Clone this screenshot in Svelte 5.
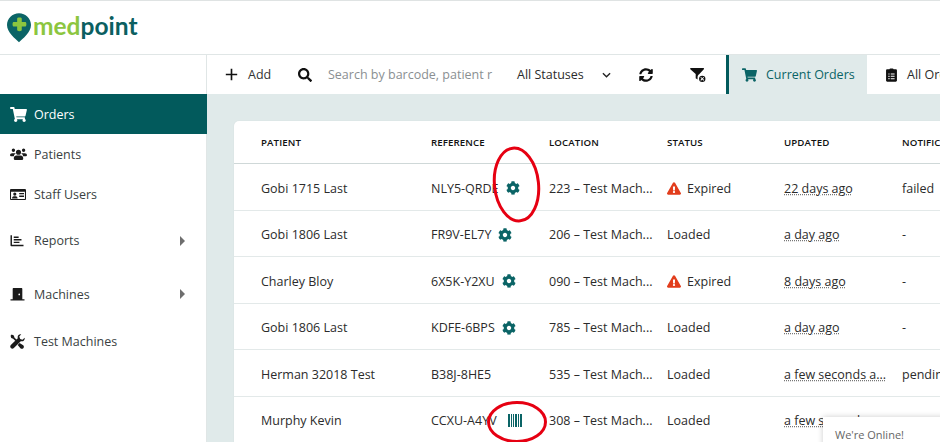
<script>
  const icons = {
    cart: { box: '0 0 576 512', d: 'M528.12 301.319l47.273-208C578.806 78.301 567.391 64 551.99 64H159.208l-9.166-44.81C147.758 8.021 137.93 0 126.529 0H24C10.745 0 0 10.745 0 24v16c0 13.255 10.745 24 24 24h69.883l70.248 343.435C147.325 417.1 136 435.222 136 456c0 30.928 25.072 56 56 56s56-25.072 56-56c0-15.674-6.447-29.835-16.824-40h209.647C430.447 426.165 424 440.326 424 456c0 30.928 25.072 56 56 56s56-25.072 56-56c0-22.172-12.888-41.332-31.579-50.405l5.517-24.276c3.413-15.018-8.002-29.319-23.403-29.319H218.117l-6.545-32h293.145c11.206 0 20.92-7.754 23.403-18.681z' },
    search: { box: '0 0 512 512', d: 'M505 442.7L405.3 343c-4.5-4.5-10.6-7-17-7H372c27.6-35.3 44-79.7 44-128C416 93.1 322.9 0 208 0S0 93.1 0 208s93.1 208 208 208c48.3 0 92.7-16.4 128-44v16.3c0 6.4 2.5 12.5 7 17l99.7 99.7c9.4 9.4 24.6 9.4 33.9 0l28.3-28.3c9.4-9.4 9.4-24.6.1-34zM208 336c-70.7 0-128-57.2-128-128 0-70.7 57.2-128 128-128 70.7 0 128 57.2 128 128 0 70.7-57.2 128-128 128z' },
    cog: { box: '0 0 512 512', d: 'M487.4 315.7l-42.6-24.6c4.3-23.2 4.3-47 0-70.2l42.6-24.6c4.9-2.8 7.1-8.6 5.5-14-11.1-35.6-30-67.8-54.7-94.6-3.8-4.1-10-5.1-14.8-2.3L380.8 110c-17.9-15.4-38.5-27.3-60.8-35.1V25.8c0-5.6-3.9-10.5-9.4-11.7-36.7-8.2-74.3-7.8-109.2 0-5.5 1.2-9.4 6.1-9.4 11.7V75c-22.2 7.9-42.8 19.8-60.8 35.1L88.7 85.5c-4.9-2.8-11-1.9-14.8 2.3-24.7 26.7-43.6 58.9-54.7 94.6-1.7 5.4.6 11.2 5.5 14L67.3 221c-4.3 23.2-4.3 47 0 70.2l-42.6 24.6c-4.9 2.8-7.1 8.6-5.5 14 11.1 35.6 30 67.8 54.7 94.6 3.8 4.1 10 5.1 14.8 2.3l42.6-24.6c17.9 15.4 38.5 27.3 60.8 35.1v49.2c0 5.6 3.9 10.5 9.4 11.7 36.7 8.2 74.3 7.8 109.2 0 5.5-1.2 9.4-6.1 9.4-11.7v-49.2c22.2-7.9 42.8-19.8 60.8-35.1l42.6 24.6c4.9 2.8 11 1.9 14.8-2.3 24.7-26.7 43.6-58.9 54.7-94.6 1.5-5.5-.7-11.3-5.6-14.1zM256 336c-44.1 0-80-35.9-80-80s35.9-80 80-80 80 35.9 80 80-35.9 80-80 80z' },
    warn: { box: '0 0 576 512', d: 'M569.517 440.013C587.975 472.007 564.806 512 527.94 512H48.054c-36.937 0-59.999-40.055-41.577-71.987L246.423 24.035c18.467-32.009 64.72-31.951 83.154 0l239.94 416.356zM288 354c-25.405 0-46 20.595-46 46s20.595 46 46 46 46-20.595 46-46-20.595-46-46-46zm-43.673-165.346l7.418 136c.347 6.364 5.609 11.346 11.982 11.346h48.546c6.373 0 11.635-4.982 11.982-11.346l7.418-136c.375-6.874-5.098-12.654-11.982-12.654h-63.383c-6.884 0-12.356 5.78-11.981 12.654z' },
    sync: { box: '0 0 512 512', d: 'M370.72 133.28C339.458 104.008 298.888 87.962 255.848 88c-77.458.068-144.328 53.178-162.791 126.85-1.344 5.363-6.122 9.15-11.651 9.15H24.103c-7.498 0-13.194-6.807-11.807-14.176C33.933 94.924 134.813 8 256 8c66.448 0 126.791 26.136 171.315 68.685L463.03 40.97C478.149 25.851 504 36.559 504 57.941V192c0 13.255-10.745 24-24 24H345.941c-21.382 0-32.09-25.851-16.971-40.971l41.75-41.749zM32 296h134.059c21.382 0 32.09 25.851 16.971 40.971l-41.75 41.75c31.262 29.273 71.835 45.319 114.876 45.28 77.418-.07 144.315-53.144 162.787-126.849 1.344-5.363 6.122-9.15 11.651-9.15h57.304c7.498 0 13.194 6.807 11.807 14.176C478.067 417.076 377.187 504 256 504c-66.448 0-126.791-26.136-171.315-68.685L48.97 471.03C33.851 486.149 8 475.441 8 454.059V320c0-13.255 10.745-24 24-24z' },
    plus: { box: '0 0 16 16', d: 'M7 1h2v6h6v2H9v6H7V9H1V7h6z' },
    users: { box: '0 0 20 16', d: 'M4 1.5a2 2 0 1 1 0 4 2 2 0 0 1 0-4zm12 0a2 2 0 1 1 0 4 2 2 0 0 1 0-4zM10 3a3 3 0 1 1 0 6 3 3 0 0 1 0-6zM0 9.5C0 7.8 1 7 2.5 7h3c.5 0 1 .2 1.3.5C5.5 8.2 4.8 9.3 4.6 10.5H1c-.6 0-1-.4-1-1zm14.5-2.5h3C19 7 20 7.8 20 9.5c0 .6-.4 1-1 1h-3.6c-.2-1.2-.9-2.3-2.2-3 .3-.3.8-.5 1.300-.5zM7.500 9.800h5c1.700 0 3 1.300 3 3v1.200c0 .6-.4 1-1 1h-9c-.6 0-1-.4-1-1v-1.200c0-1.700 1.300-3 3-3z' },
    idcard: { box: '0 0 20 16', d: 'M1.5 1h17c.8 0 1.500.7 1.500 1.500v11c0 .8-.7 1.500-1.500 1.500h-17C.7 15 0 14.300 0 13.500v-11C0 1.700.7 1 1.500 1zM1.300 4.500v8.700c0 .3.200.5.500.5h16.400c.3 0 .5-.2.500-.5V4.500zM6 5.500a2 2 0 1 1 0 4 2 2 0 0 1 0-4zM2.500 13c0-1.500.9-2.800 2.300-2.800h2.400c1.400 0 2.300 1.300 2.300 2.800zM11.500 6h6v1.800h-6zm0 3.200h6V11h-6z' },
    chart: { box: '0 0 16 16', d: 'M0 1.500h1.800v11.700H16V15H1c-.6 0-1-.4-1-1zM4 3h6v1.800H4zm0 3.200h9.500V8H4zm0 3.200h7v1.800H4z' },
    door: { box: '0 0 16 16', d: 'M3.500 1h9c.5 0 1 .5 1 1v12H16v1.500H0V14h2.500V2c0-.5.500-1 1-1zm6.500 6.500a1 1 0 1 0 0 2 1 1 0 0 0 0-2z' },
    tools: { box: '0 0 16 16', d: 'M1.800.6L.6 1.800l.7 2.400 2.100.8 3.400 3.400 1.300-1.300L4.700 3.700 4.100 1.500zM12 .3c-2.100-.5-4 1.100-3.800 3.200l.1.900L.9 11.800c-.9.900-.9 2.300 0 3.200.9.900 2.300.9 3.200 0l7.400-7.400.9.100c2.100.2 3.700-1.700 3.200-3.800L13.300 6.200 10.900 5.200 9.900 2.700zM10.200 9.600l-2 2 2.900 3.500c.8.900 2.200 1 3.100.1.900-.9.800-2.300-.1-3.100z' },
    filter: { box: '0 0 18 16', d: 'M.8 1h13.400c.7 0 1 .8.500 1.300L9.700 7.600c-1 .6-1.700 1.700-1.700 3v2.700L6 12V7.500L.3 2.300C-.2 1.800.1 1 .8 1zM13 9.200a3.400 3.400 0 1 1 0 6.800 3.400 3.400 0 0 1 0-6.800zm-1.300 1.400l-.7.700 1.300 1.300-1.300 1.300.7.700 1.300-1.300 1.300 1.300.7-.7-1.300-1.300 1.300-1.300-.7-.7-1.300 1.300z' },
    clipboard: { box: '0 0 14 18', d: 'M5.500.5h3c.6 0 1 .5 1.200 1.200H12.500c.8 0 1.500.7 1.500 1.500v13c0 .8-.7 1.500-1.500 1.500h-11C.7 17.700 0 17 0 16.200v-13c0-.8.7-1.500 1.500-1.500h2.800C4.500 1 4.900.5 5.500.5zM3 7v1.500h1.500V7zm3 .1v1.300h5V7.100zM3 10v1.500h1.500V10zm3 .1v1.300h5v-1.300zM3 13v1.500h1.500V13zm3 .1v1.300h5v-1.300z' }
  }

  const nav = [
    { label: 'Orders', icon: 'cart', w: 17, h: 15, active: true, cls: 'first' },
    { label: 'Patients', icon: 'users', w: 17, h: 14, cls: 'plain' },
    { label: 'Staff Users', icon: 'idcard', w: 16, h: 13, cls: 'plain' },
    { label: 'Reports', icon: 'chart', w: 14, h: 13, arrow: true, cls: 'wide' },
    { label: 'Machines', icon: 'door', w: 15, h: 14, arrow: true, cls: 'wide' },
    { label: 'Test Machines', icon: 'tools', w: 15, h: 15, cls: 'plain' }
  ]

  const rows = [
    { patient: 'Gobi 1715 Last', ref: 'NLY5-QRDE', mark: 'cog', loc: '223 – Test Mach...', status: 'Expired', warn: true, updated: '22 days ago', note: 'failed' },
    { patient: 'Gobi 1806 Last', ref: 'FR9V-EL7Y', mark: 'cog', loc: '206 – Test Mach...', status: 'Loaded', updated: 'a day ago', note: '-' },
    { patient: 'Charley Bloy', ref: '6X5K-Y2XU', mark: 'cog', loc: '090 – Test Mach...', status: 'Expired', warn: true, updated: '8 days ago', note: '-' },
    { patient: 'Gobi 1806 Last', ref: 'KDFE-6BPS', mark: 'cog', loc: '785 – Test Mach...', status: 'Loaded', updated: 'a day ago', note: '-' },
    { patient: 'Herman 32018 Test', ref: 'B38J-8HE5', loc: '535 – Test Mach...', status: 'Loaded', updated: 'a few seconds a...', note: 'pending' },
    { patient: 'Murphy Kevin', ref: 'CCXU-A4YV', mark: 'barcode', loc: '308 – Test Mach...', status: 'Loaded', updated: 'a few seconds a...', note: '' }
  ]
</script>

{#snippet icon(name, w, h)}
  <svg class="icon" width={w} height={h} viewBox={icons[name].box} fill="currentColor"><path d={icons[name].d} /></svg>
{/snippet}

<div class="page">
  <header class="top">
    <svg class="pin" width="24" height="30" viewBox="0 0 26 32">
      <path d="M13 0C5.800 0 0 5.700 0 12.800 0 21 9 27.500 13 31.500 17 27.500 26 21 26 12.800 26 5.700 20.200 0 13 0z" fill="#0b6466" />
      <path d="M11 6c0-1 .6-1.500 2.500-1.500S16 5 16 6v3.500h3.500c1 0 1.500.6 1.500 2.500s-.5 2.500-1.500 2.500H16V18c0 1-.6 1.500-2.500 1.500S11 19 11 18v-3.500H7.500c-1 0-1.500-.6-1.500-2.500s.5-2.500 1.500-2.500H11z" fill="#8cc63f" />
    </svg>
    <div class="word"><span class="med">med</span><span class="point">point</span></div>
  </header>

  <div class="body">
    <aside class="side">
      {#each nav as item}
        <div class="nav {item.cls}" class:active={item.active}>
          <span class="nav-icon">{@render icon(item.icon, item.w, item.h)}</span>
          <span class="nav-label">{item.label}</span>
          {#if item.arrow}<span class="arrow"></span>{/if}
        </div>
      {/each}
    </aside>

    <main class="main">
      <div class="toolbar">
        <div class="tool add">{@render icon('plus', 13, 13)}<span>Add</span></div>
        <div class="tool searchbox">
          {@render icon('search', 14, 14)}
          <span class="placeholder">Search by barcode, patient r</span>
        </div>
        <div class="tool select">
          <span>All Statuses</span>
          <svg width="9" height="6" viewBox="0 0 10 6" fill="none" stroke="#222" stroke-width="1.500"><path d="M1 1l4 4 4-4" /></svg>
        </div>
        <div class="tool sync">{@render icon('sync', 14, 14)}</div>
        <div class="tool clear">{@render icon('filter', 17, 15)}</div>
        <div class="tab current">{@render icon('cart', 15, 14)}<span>Current Orders</span></div>
        <div class="tab other">{@render icon('clipboard', 11, 14)}<span>All Orders</span></div>
      </div>

      <div class="content">
        <div class="card">
          <div class="row head">
            <div>PATIENT</div>
            <div>REFERENCE</div>
            <div>LOCATION</div>
            <div>STATUS</div>
            <div>UPDATED</div>
            <div>NOTIFICATION</div>
          </div>
          {#each rows as r}
            <div class="row">
              <div>{r.patient}</div>
              <div class="ref">
                <span>{r.ref}</span>
                {#if r.mark === 'cog'}
                  <span class="mark">{@render icon('cog', 14, 14)}</span>
                {:else if r.mark === 'barcode'}
                  <svg class="mark code" width="14" height="13" viewBox="0 0 14 13" fill="#0b6466">
                    <rect x="0" width="2" height="13" /><rect x="3" width="1" height="13" /><rect x="5" width="1" height="13" /><rect x="7" width="2" height="13" /><rect x="10" width="1" height="13" /><rect x="12" width="2" height="13" />
                  </svg>
                {/if}
              </div>
              <div>{r.loc}</div>
              <div class="status">
                {#if r.warn}<span class="warn">{@render icon('warn', 14, 13)}</span>{/if}
                <span>{r.status}</span>
              </div>
              <div><span class="time">{r.updated}</span></div>
              <div>{r.note}</div>
            </div>
          {/each}
        </div>
      </div>
    </main>
  </div>

  <svg class="marks" width="940" height="442" viewBox="0 0 940 442" fill="none" stroke="#e60012" stroke-width="3">
    <ellipse cx="516.5" cy="184.5" rx="22" ry="36.5" transform="rotate(-6 516.5 184.5)" />
    <ellipse cx="517" cy="422" rx="28.5" ry="19.5" />
  </svg>

  <div class="chat">We're Online!</div>
</div>

<style>
  :global(body) {
    margin: 0;
    background: #fff;
  }

  .page {
    position: relative;
    width: 940px;
    height: 442px;
    overflow: hidden;
    font-family: "Open Sans", "Liberation Sans", sans-serif;
    font-size: 12.5px;
    color: #2b2b2b;
    background: #fff;
    display: flex;
    flex-direction: column;
  }

  .top {
    flex: none;
    height: 55px;
    box-sizing: border-box;
    border-top: 1px solid #dfe3e3;
    border-bottom: 1px solid #e0e6e6;
    display: flex;
    align-items: flex-start;
    padding: 12px 0 0 7px;
    gap: 2px;
  }

  .word {
    font-family: Lato, "Open Sans", sans-serif;
    font-weight: 700;
    font-size: 24.5px;
    line-height: 26px;
  }

  .med {
    color: #8cc63f;
  }

  .point {
    color: #0b5f61;
  }

  .body {
    flex: 1;
    display: flex;
    min-height: 0;
  }

  .side {
    flex: none;
    width: 207px;
    padding-top: 39px;
    box-sizing: border-box;
    border-right: 1px solid #e0e6e6;
  }

  .nav {
    display: flex;
    align-items: center;
    padding: 0 21px 0 10px;
    height: 40px;
    color: #3a3f42;
  }

  .nav.active {
    background: #025a5c;
    color: #fff;
    margin-right: -1px;
  }

  .nav.wide {
    height: 53.5px;
  }

  .nav-icon {
    width: 24px;
    display: flex;
    color: #1b1b1b;
  }

  .active .nav-icon {
    color: #fff;
  }

  .nav-label {
    flex: 1;
  }

  .arrow {
    width: 0;
    height: 0;
    border-left: 5px solid #6e6e6e;
    border-top: 5px solid transparent;
    border-bottom: 5px solid transparent;
  }

  .main {
    flex: 1;
    min-width: 0;
    display: flex;
    flex-direction: column;
    background: #e0eaea;
  }

  .toolbar {
    flex: none;
    height: 39px;
    background: #fff;
    display: flex;
    align-items: stretch;
    white-space: nowrap;
  }

  .tool {
    display: flex;
    align-items: center;
    color: #111;
    flex: none;
  }

  .add {
    width: 74px;
    padding-left: 18px;
    box-sizing: border-box;
    gap: 10px;
  }

  .add span {
    color: #333;
  }

  .searchbox {
    width: 236px;
    padding-left: 17px;
    box-sizing: border-box;
    gap: 16px;
  }

  .placeholder {
    color: #8a8f92;
  }

  .select {
    width: 122px;
    gap: 18px;
  }

  .select span {
    color: #2b2b2b;
  }

  .sync {
    width: 51px;
  }

  .clear {
    width: 36px;
  }

  .tab {
    display: flex;
    align-items: center;
    flex: none;
  }

  .current {
    width: 141px;
    box-sizing: border-box;
    border-left: 3px solid #025a5c;
    background: #e0eaea;
    color: #0b6466;
    padding-left: 13px;
    gap: 9px;
  }

  .other {
    padding-left: 19px;
    gap: 10px;
    color: #111;
  }

  .other span {
    color: #2b2b2b;
  }

  .content {
    flex: 1;
    padding: 27px 0 0 27px;
    overflow: hidden;
  }

  .card {
    background: #fff;
    border-radius: 5px 0 0 0;
    width: 720px;
    box-shadow: 0 0 2px rgba(0, 0, 0, 0.06);
  }

  .row {
    display: grid;
    grid-template-columns: 170px 118px 118px 117px 118px 1fr;
    align-items: center;
    height: 46.5px;
    padding: 3px 0 0 27px;
    box-sizing: border-box;
    border-bottom: 1px solid #e3e9e9;
    white-space: nowrap;
    overflow: hidden;
  }

  .row.head {
    height: 43px;
    padding: 0 0 0 27px;
    font-size: 9.7px;
    font-weight: 600;
    color: #111;
    letter-spacing: 0.1px;
    border-bottom: 1px solid #cfd8d8;
  }

  .ref {
    display: flex;
    align-items: center;
    gap: 7px;
  }

  .mark {
    display: flex;
    color: #0b6466;
  }

  .code {
    margin-left: 4px;
  }

  .status {
    display: flex;
    align-items: center;
    gap: 6px;
  }

  .warn {
    display: flex;
    color: #e23d1c;
  }

  .time {
    text-decoration: underline dotted #777;
    text-underline-offset: 1px;
  }

  .marks {
    position: absolute;
    left: 0;
    top: 0;
    pointer-events: none;
  }

  .chat {
    position: absolute;
    left: 823px;
    top: 417px;
    width: 130px;
    height: 40px;
    padding: 10px 0 0 12px;
    box-sizing: border-box;
    background: #fff;
    color: #666;
    font-size: 11px;
    box-shadow: 0 0 6px rgba(0, 0, 0, 0.2);
  }
</style>
